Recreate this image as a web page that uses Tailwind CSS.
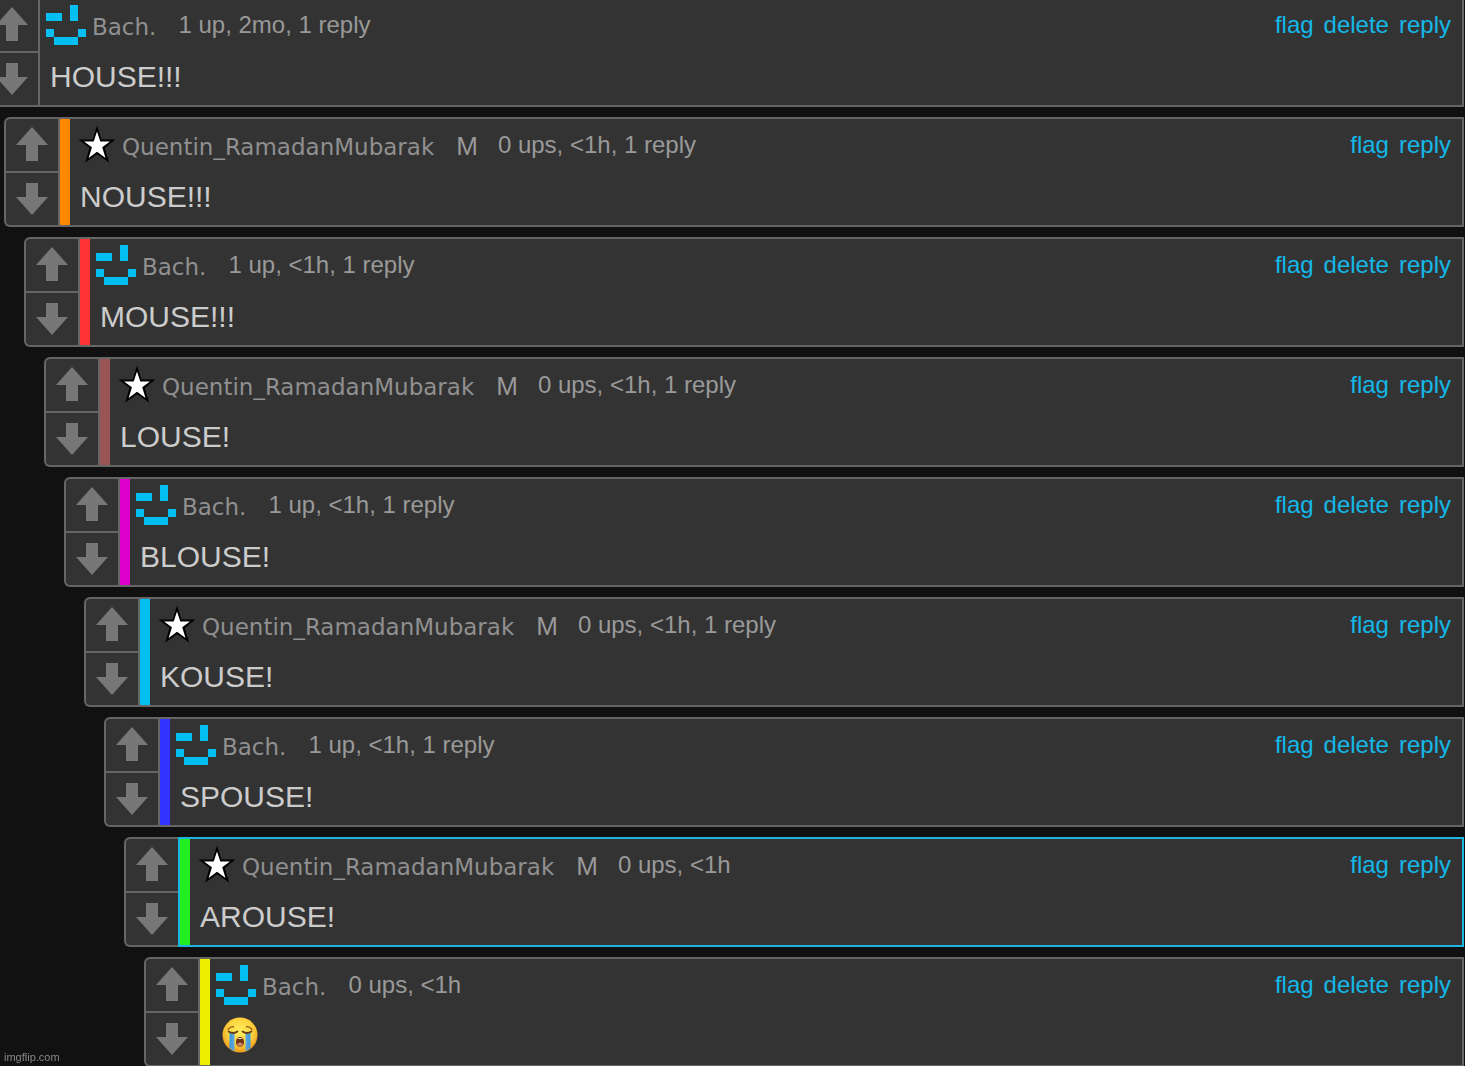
<!DOCTYPE html>
<html lang="en">
<head>
  <meta charset="UTF-8" />
  <meta name="viewport" content="width=device-width, initial-scale=1.0"/>
  <title>Comments - Imgflip</title>
  <script src="https://cdn.jsdelivr.net/npm/@tailwindcss/browser@4"></script>
</head>
<body class="h-screen overflow-hidden bg-[#111] font-['Liberation_Sans',Arial,sans-serif] text-[#ccc]">

  <!-- shared icons -->
  <svg class="absolute size-0">
    <symbol id="up" viewBox="0 0 32 34"><path d="M16 0L32 18H22V34H10V18H0Z" fill="#777"/></symbol>
    <symbol id="down" viewBox="0 0 32 32"><path d="M10 0H22V14H32L16 32L0 14H10Z" fill="#777"/></symbol>
    <symbol id="smiley" viewBox="0 0 40 40"><path d="M24 0h8v16h-8zM0 8h16v8H0zM0 24h8v8H0zM32 24h8v8h-8zM8 32h24v8H8z" fill="#06bff2" shape-rendering="crispEdges"/></symbol>
    <symbol id="star" viewBox="0 0 40 40">
      <path d="M21 0.500L25.500 14.500H39.500L28.800 23L33.200 37.500L21 29.300L9.300 37.500L13.400 23L2.500 14.500H16.500Z" fill="#000"/>
      <path d="M21 6.500L24.300 16.500H34L26.200 22.300L29.500 33L21 26.800L12.700 33L15.900 22.300L8 16.500H17.700Z" fill="#fff"/>
    </symbol>
    <symbol id="sob" viewBox="0 0 36 36">
      <defs>
        <radialGradient id="face" cx="0.5" cy="0.4" r="0.6">
          <stop offset="0" stop-color="#ffec62"/><stop offset="0.6" stop-color="#fdd33f"/><stop offset="1" stop-color="#ee981b"/>
        </radialGradient>
        <linearGradient id="tear" x1="0" y1="0" x2="1" y2="0">
          <stop offset="0" stop-color="#3f95d6"/><stop offset="0.5" stop-color="#7cc2ef"/><stop offset="1" stop-color="#3f95d6"/>
        </linearGradient>
      </defs>
      <circle cx="18" cy="18" r="17.500" fill="url(#face)"/>
      <path d="M7.500 16h5v18Q10 33 7.500 31ZM23.500 16h5v15Q26 33 23.500 34Z" fill="url(#tear)"/>
      <path d="M6.500 14.500Q11 17.500 15.500 14.500M20.500 14.500Q25 17.500 29.500 14.500" fill="none" stroke="#6b3f10" stroke-width="1.800" stroke-linecap="round"/>
      <path d="M6 12.500Q8 9.500 11.500 9.800M30 12.500Q28 9.500 24.500 9.800" fill="none" stroke="#a8661a" stroke-width="1.400" stroke-linecap="round"/>
      <ellipse cx="18" cy="25" rx="4" ry="5" fill="#6d3212"/>
      <ellipse cx="18" cy="27.500" rx="2.600" ry="2" fill="#c98a6a"/>
      <path d="M15.200 22Q18 20.200 20.800 22Z" fill="#fff"/>
    </symbol>
  </svg>

  <main class="-mt-[3px] flex flex-col gap-2.5 pr-px">

    <article class="-ml-4 flex">
      <div class="flex w-[54px] shrink-0 flex-col rounded-l-md border-2 border-r-0 border-[#666] bg-[#333]">
        <button aria-label="Upvote" class="flex h-[54px] items-start justify-center border-b-2 border-[#666] pt-2"><svg class="h-[34px] w-8"><use href="#up"/></svg></button>
        <button aria-label="Downvote" class="flex flex-1 items-start justify-center pt-2.5"><svg class="size-8"><use href="#down"/></svg></button>
      </div>
      <div class="min-w-0 flex-1 border-2 border-[#666] bg-[#333] pt-1.5 pr-[11px] pb-1 pl-1.5">
        <header class="flex h-10 items-center text-2xl text-[#999]">
          <svg class="mr-1.5 size-10"><use href="#smiley"/></svg>
          <a href="#" class="pt-1 font-['DejaVu_Sans',Verdana,sans-serif] text-[23px] text-[#909090]">Bach.</a>
          <span class="ml-[22px]">1 up, 2mo, 1 reply</span>
          <nav class="ml-auto flex gap-2.5 text-[#13b8e8]"><a href="#">flag</a><a href="#">delete</a><a href="#">reply</a></nav>
        </header>
        <p class="mt-2 pl-1 text-[30px] leading-12">HOUSE!!!</p>
      </div>
    </article>

    <article class="ml-1 flex">
      <div class="flex w-[54px] shrink-0 flex-col rounded-l-md border-2 border-r-0 border-[#666] bg-[#333]">
        <button aria-label="Upvote" class="flex h-[54px] items-start justify-center border-b-2 border-[#666] pt-2"><svg class="h-[34px] w-8"><use href="#up"/></svg></button>
        <button aria-label="Downvote" class="flex flex-1 items-start justify-center pt-2.5"><svg class="size-8"><use href="#down"/></svg></button>
      </div>
      <div class="flex min-w-0 flex-1 border-2 border-[#666] bg-[#333]">
        <div class="w-2.5 bg-[#ff8800]"></div>
        <div class="min-w-0 flex-1 pt-1.5 pr-[11px] pb-1 pl-1.5">
          <header class="flex h-10 items-center text-2xl text-[#999]">
            <svg class="mr-1.5 size-10"><use href="#star"/></svg>
            <a href="#" class="pt-1 font-['DejaVu_Sans',Verdana,sans-serif] text-[23px] text-[#909090]">Quentin_RamadanMubarak</a>
            <span class="ml-[22px] pt-0.5 text-[26px]">M</span>
            <span class="ml-5">0 ups, &lt;1h, 1 reply</span>
            <nav class="ml-auto flex gap-2.5 text-[#13b8e8]"><a href="#">flag</a><a href="#">reply</a></nav>
          </header>
          <p class="mt-2 pl-1 text-[30px] leading-12">NOUSE!!!</p>
        </div>
      </div>
    </article>

    <article class="ml-6 flex">
      <div class="flex w-[54px] shrink-0 flex-col rounded-l-md border-2 border-r-0 border-[#666] bg-[#333]">
        <button aria-label="Upvote" class="flex h-[54px] items-start justify-center border-b-2 border-[#666] pt-2"><svg class="h-[34px] w-8"><use href="#up"/></svg></button>
        <button aria-label="Downvote" class="flex flex-1 items-start justify-center pt-2.5"><svg class="size-8"><use href="#down"/></svg></button>
      </div>
      <div class="flex min-w-0 flex-1 border-2 border-[#666] bg-[#333]">
        <div class="w-2.5 bg-[#ff3333]"></div>
        <div class="min-w-0 flex-1 pt-1.5 pr-[11px] pb-1 pl-1.5">
          <header class="flex h-10 items-center text-2xl text-[#999]">
            <svg class="mr-1.5 size-10"><use href="#smiley"/></svg>
            <a href="#" class="pt-1 font-['DejaVu_Sans',Verdana,sans-serif] text-[23px] text-[#909090]">Bach.</a>
            <span class="ml-[22px]">1 up, &lt;1h, 1 reply</span>
            <nav class="ml-auto flex gap-2.5 text-[#13b8e8]"><a href="#">flag</a><a href="#">delete</a><a href="#">reply</a></nav>
          </header>
          <p class="mt-2 pl-1 text-[30px] leading-12">MOUSE!!!</p>
        </div>
      </div>
    </article>

    <article class="ml-11 flex">
      <div class="flex w-[54px] shrink-0 flex-col rounded-l-md border-2 border-r-0 border-[#666] bg-[#333]">
        <button aria-label="Upvote" class="flex h-[54px] items-start justify-center border-b-2 border-[#666] pt-2"><svg class="h-[34px] w-8"><use href="#up"/></svg></button>
        <button aria-label="Downvote" class="flex flex-1 items-start justify-center pt-2.5"><svg class="size-8"><use href="#down"/></svg></button>
      </div>
      <div class="flex min-w-0 flex-1 border-2 border-[#666] bg-[#333]">
        <div class="w-2.5 bg-[#995555]"></div>
        <div class="min-w-0 flex-1 pt-1.5 pr-[11px] pb-1 pl-1.5">
          <header class="flex h-10 items-center text-2xl text-[#999]">
            <svg class="mr-1.5 size-10"><use href="#star"/></svg>
            <a href="#" class="pt-1 font-['DejaVu_Sans',Verdana,sans-serif] text-[23px] text-[#909090]">Quentin_RamadanMubarak</a>
            <span class="ml-[22px] pt-0.5 text-[26px]">M</span>
            <span class="ml-5">0 ups, &lt;1h, 1 reply</span>
            <nav class="ml-auto flex gap-2.5 text-[#13b8e8]"><a href="#">flag</a><a href="#">reply</a></nav>
          </header>
          <p class="mt-2 pl-1 text-[30px] leading-12">LOUSE!</p>
        </div>
      </div>
    </article>

    <article class="ml-16 flex">
      <div class="flex w-[54px] shrink-0 flex-col rounded-l-md border-2 border-r-0 border-[#666] bg-[#333]">
        <button aria-label="Upvote" class="flex h-[54px] items-start justify-center border-b-2 border-[#666] pt-2"><svg class="h-[34px] w-8"><use href="#up"/></svg></button>
        <button aria-label="Downvote" class="flex flex-1 items-start justify-center pt-2.5"><svg class="size-8"><use href="#down"/></svg></button>
      </div>
      <div class="flex min-w-0 flex-1 border-2 border-[#666] bg-[#333]">
        <div class="w-2.5 bg-[#dd00cc]"></div>
        <div class="min-w-0 flex-1 pt-1.5 pr-[11px] pb-1 pl-1.5">
          <header class="flex h-10 items-center text-2xl text-[#999]">
            <svg class="mr-1.5 size-10"><use href="#smiley"/></svg>
            <a href="#" class="pt-1 font-['DejaVu_Sans',Verdana,sans-serif] text-[23px] text-[#909090]">Bach.</a>
            <span class="ml-[22px]">1 up, &lt;1h, 1 reply</span>
            <nav class="ml-auto flex gap-2.5 text-[#13b8e8]"><a href="#">flag</a><a href="#">delete</a><a href="#">reply</a></nav>
          </header>
          <p class="mt-2 pl-1 text-[30px] leading-12">BLOUSE!</p>
        </div>
      </div>
    </article>

    <article class="ml-21 flex">
      <div class="flex w-[54px] shrink-0 flex-col rounded-l-md border-2 border-r-0 border-[#666] bg-[#333]">
        <button aria-label="Upvote" class="flex h-[54px] items-start justify-center border-b-2 border-[#666] pt-2"><svg class="h-[34px] w-8"><use href="#up"/></svg></button>
        <button aria-label="Downvote" class="flex flex-1 items-start justify-center pt-2.5"><svg class="size-8"><use href="#down"/></svg></button>
      </div>
      <div class="flex min-w-0 flex-1 border-2 border-[#666] bg-[#333]">
        <div class="w-2.5 bg-[#06bff2]"></div>
        <div class="min-w-0 flex-1 pt-1.5 pr-[11px] pb-1 pl-1.5">
          <header class="flex h-10 items-center text-2xl text-[#999]">
            <svg class="mr-1.5 size-10"><use href="#star"/></svg>
            <a href="#" class="pt-1 font-['DejaVu_Sans',Verdana,sans-serif] text-[23px] text-[#909090]">Quentin_RamadanMubarak</a>
            <span class="ml-[22px] pt-0.5 text-[26px]">M</span>
            <span class="ml-5">0 ups, &lt;1h, 1 reply</span>
            <nav class="ml-auto flex gap-2.5 text-[#13b8e8]"><a href="#">flag</a><a href="#">reply</a></nav>
          </header>
          <p class="mt-2 pl-1 text-[30px] leading-12">KOUSE!</p>
        </div>
      </div>
    </article>

    <article class="ml-26 flex">
      <div class="flex w-[54px] shrink-0 flex-col rounded-l-md border-2 border-r-0 border-[#666] bg-[#333]">
        <button aria-label="Upvote" class="flex h-[54px] items-start justify-center border-b-2 border-[#666] pt-2"><svg class="h-[34px] w-8"><use href="#up"/></svg></button>
        <button aria-label="Downvote" class="flex flex-1 items-start justify-center pt-2.5"><svg class="size-8"><use href="#down"/></svg></button>
      </div>
      <div class="flex min-w-0 flex-1 border-2 border-[#666] bg-[#333]">
        <div class="w-2.5 bg-[#3333ff]"></div>
        <div class="min-w-0 flex-1 pt-1.5 pr-[11px] pb-1 pl-1.5">
          <header class="flex h-10 items-center text-2xl text-[#999]">
            <svg class="mr-1.5 size-10"><use href="#smiley"/></svg>
            <a href="#" class="pt-1 font-['DejaVu_Sans',Verdana,sans-serif] text-[23px] text-[#909090]">Bach.</a>
            <span class="ml-[22px]">1 up, &lt;1h, 1 reply</span>
            <nav class="ml-auto flex gap-2.5 text-[#13b8e8]"><a href="#">flag</a><a href="#">delete</a><a href="#">reply</a></nav>
          </header>
          <p class="mt-2 pl-1 text-[30px] leading-12">SPOUSE!</p>
        </div>
      </div>
    </article>

    <!-- linked comment, highlighted -->
    <article class="ml-31 flex">
      <div class="flex w-[54px] shrink-0 flex-col rounded-l-md border-2 border-r-0 border-[#666] bg-[#333]">
        <button aria-label="Upvote" class="flex h-[54px] items-start justify-center border-b-2 border-[#666] pt-2"><svg class="h-[34px] w-8"><use href="#up"/></svg></button>
        <button aria-label="Downvote" class="flex flex-1 items-start justify-center pt-2.5"><svg class="size-8"><use href="#down"/></svg></button>
      </div>
      <div class="flex min-w-0 flex-1 border-2 border-[#1bb5e0] bg-[#333]">
        <div class="w-2.5 bg-[#22ee22]"></div>
        <div class="min-w-0 flex-1 pt-1.5 pr-[11px] pb-1 pl-1.5">
          <header class="flex h-10 items-center text-2xl text-[#999]">
            <svg class="mr-1.5 size-10"><use href="#star"/></svg>
            <a href="#" class="pt-1 font-['DejaVu_Sans',Verdana,sans-serif] text-[23px] text-[#909090]">Quentin_RamadanMubarak</a>
            <span class="ml-[22px] pt-0.5 text-[26px]">M</span>
            <span class="ml-5">0 ups, &lt;1h</span>
            <nav class="ml-auto flex gap-2.5 text-[#13b8e8]"><a href="#">flag</a><a href="#">reply</a></nav>
          </header>
          <p class="mt-2 pl-1 text-[30px] leading-12">AROUSE!</p>
        </div>
      </div>
    </article>

    <article class="ml-36 flex">
      <div class="flex w-[54px] shrink-0 flex-col rounded-l-md border-2 border-r-0 border-[#666] bg-[#333]">
        <button aria-label="Upvote" class="flex h-[54px] items-start justify-center border-b-2 border-[#666] pt-2"><svg class="h-[34px] w-8"><use href="#up"/></svg></button>
        <button aria-label="Downvote" class="flex flex-1 items-start justify-center pt-2.5"><svg class="size-8"><use href="#down"/></svg></button>
      </div>
      <div class="flex min-w-0 flex-1 border-2 border-[#666] bg-[#333]">
        <div class="w-2.5 bg-[#eeee00]"></div>
        <div class="min-w-0 flex-1 pt-1.5 pr-[11px] pb-1 pl-1.5">
          <header class="flex h-10 items-center text-2xl text-[#999]">
            <svg class="mr-1.5 size-10"><use href="#smiley"/></svg>
            <a href="#" class="pt-1 font-['DejaVu_Sans',Verdana,sans-serif] text-[23px] text-[#909090]">Bach.</a>
            <span class="ml-[22px]">0 ups, &lt;1h</span>
            <nav class="ml-auto flex gap-2.5 text-[#13b8e8]"><a href="#">flag</a><a href="#">delete</a><a href="#">reply</a></nav>
          </header>
          <p class="mt-1.5 mb-0.5 flex h-12 items-center pl-1.5"><svg role="img" aria-label="Loudly crying face" class="size-9"><use href="#sob"/></svg></p>
        </div>
      </div>
    </article>

  </main>

  <div class="fixed bottom-px left-1 text-[11px] leading-4 text-[#888]">imgflip.com</div>
</body>
</html>
